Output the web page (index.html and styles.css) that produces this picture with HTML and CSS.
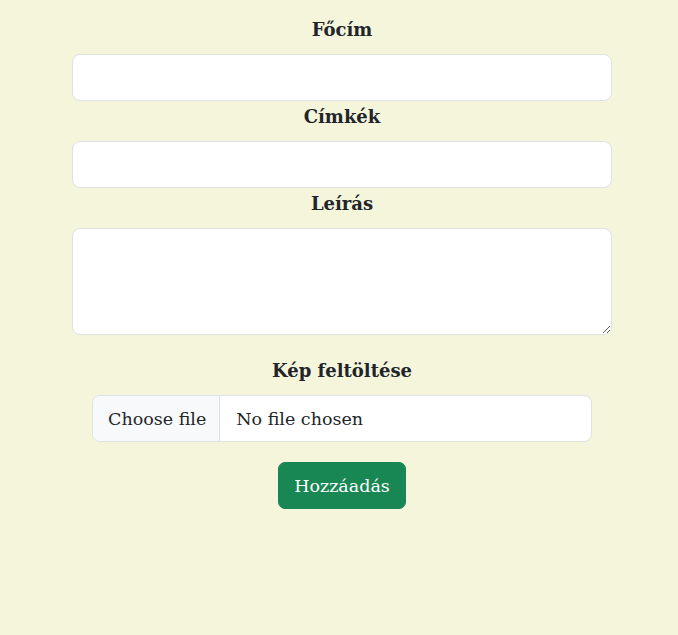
FILE: index.html
```html
<!DOCTYPE html>
<html lang="hu">
<head>
<meta charset="utf-8">
<title>Hozzáadás</title>
<link rel="stylesheet" href="styles.css">
</head>
<body>
<form class="form">
  <label class="label" for="focim">Főcím</label>
  <input class="field" id="focim" type="text">
  <label class="label" for="cimkek">Címkék</label>
  <input class="field" id="cimkek" type="text">
  <label class="label" for="leiras">Leírás</label>
  <textarea class="field area" id="leiras"></textarea>
  <label class="label label-gap" for="kep">Kép feltöltése</label>
  <label class="file">
    <input class="file-input" id="kep" type="file">
    <span class="file-btn">Choose file</span>
    <span class="file-name">No file chosen</span>
  </label>
  <button class="btn" type="button">Hozzáadás</button>
</form>
</body>
</html>
```
FILE: styles.css
```css
html, body {
  margin: 0;
  padding: 0;
  background: #f5f5dc;
}
body {
  font-family: "DejaVu Serif", "Liberation Serif", serif;
  color: #212529;
}
.form {
  width: 540px;
  margin: 0 0 0 72px;
  padding-top: 14px;
  display: flex;
  flex-direction: column;
  align-items: center;
}
.label {
  display: block;
  font-weight: bold;
  font-size: 18px;
  line-height: 27px;
  margin: 2px 0 11px;
  text-align: center;
}
.label-gap {
  margin-top: 22px;
}
.field {
  box-sizing: border-box;
  width: 540px;
  height: 47px;
  background: #fff;
  border: 1px solid #dee2e6;
  border-radius: 8px;
  padding: 8px 16px;
  font: inherit;
  font-size: 17.5px;
  margin: 0;
  display: block;
}
.area {
  height: 107px;
  resize: vertical;
}
.file {
  box-sizing: border-box;
  width: 500px;
  height: 47px;
  background: #fff;
  border: 1px solid #dee2e6;
  border-radius: 8px;
  display: flex;
  align-items: stretch;
  overflow: hidden;
  font-size: 17.5px;
  color: #212529;
  cursor: pointer;
}
.file-input {
  display: none;
}
.file-btn {
  display: flex;
  align-items: center;
  padding: 0 13px 0 15px;
  background: #f8f9fa;
  border-right: 1px solid #dee2e6;
}
.file-name {
  display: flex;
  align-items: center;
  padding-left: 16px;
}
.btn {
  margin-top: 20px;
  box-sizing: border-box;
  height: 47px;
  width: 128px;
  padding: 0;
  background: #198754;
  color: #fff;
  border: 1px solid #198754;
  border-radius: 7px;
  font-family: "DejaVu Serif", "Liberation Serif", serif;
  font-size: 17.5px;
}
```
